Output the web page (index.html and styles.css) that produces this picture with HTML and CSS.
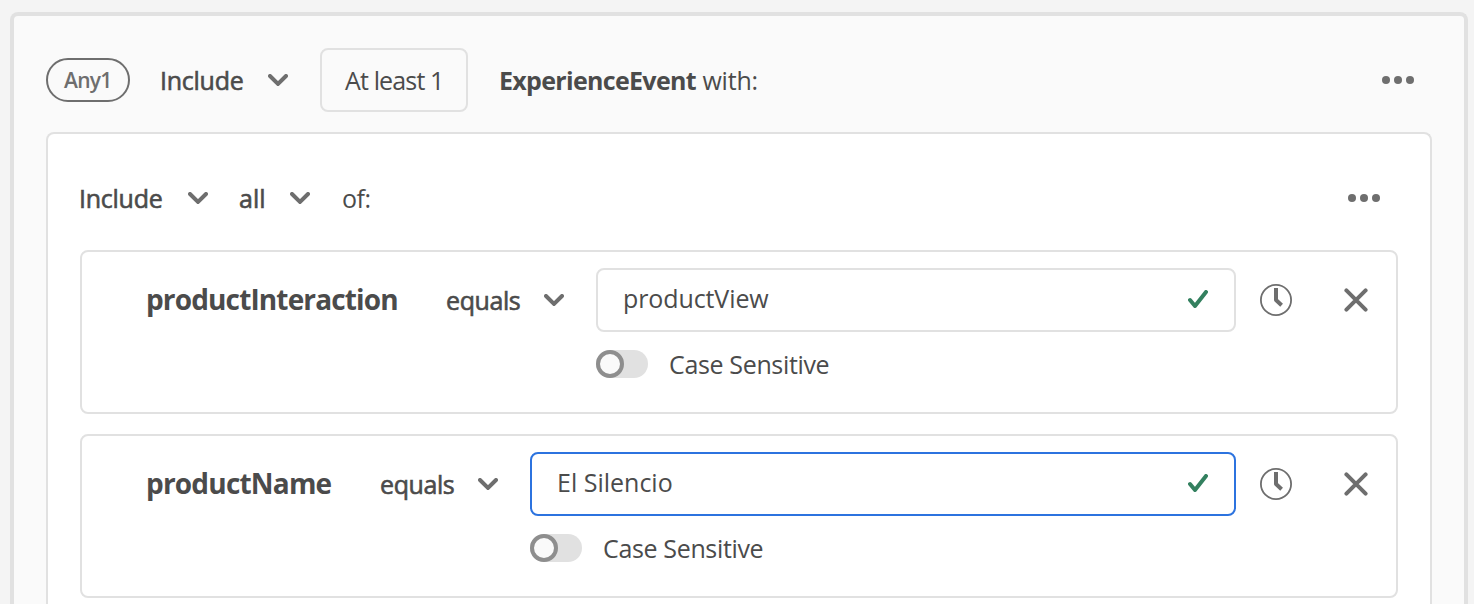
FILE: index.html
```html
<!DOCTYPE html>
<html lang="en">
<head>
<meta charset="utf-8">
<title>Segment builder</title>
<link rel="stylesheet" href="styles.css">
</head>
<body>
<svg class="defs" width="0" height="0">
  <symbol id="chevron" viewBox="0 0 20 12"><path d="M2 2 10 9.9 18 2" fill="none" stroke="currentColor" stroke-width="4" stroke-linecap="round"/></symbol>
  <symbol id="more" viewBox="0 0 32 8"><circle cx="4" cy="4" r="4"/><circle cx="16" cy="4" r="4"/><circle cx="28" cy="4" r="4"/></symbol>
  <symbol id="check" viewBox="0 0 20 18"><path d="M2 10 7 16 18 2" fill="none" stroke="currentColor" stroke-width="4" stroke-linecap="round" stroke-linejoin="round"/></symbol>
  <symbol id="clock" viewBox="0 0 32 32"><circle cx="16" cy="16" r="15.1" fill="none" stroke="currentColor" stroke-width="1.8"/><path d="M16 4V16L21.6 21.2" fill="none" stroke="currentColor" stroke-width="4" stroke-linejoin="round"/></symbol>
  <symbol id="cross" viewBox="0 0 24 24"><path d="M2.4 2.4 21.6 21.6M21.6 2.4 2.4 21.6" fill="none" stroke="currentColor" stroke-width="4" stroke-linecap="round"/></symbol>
</svg>
<main class="event">
  <header class="event-head">
    <span class="pill">Any1</span>
    <span class="picker include">Include</span>
    <svg class="chevron"><use href="#chevron"/></svg>
    <span class="count">At least 1</span>
    <span class="event-name"><b>ExperienceEvent</b> <span class="with">with:</span></span>
    <svg class="more"><use href="#more"/></svg>
  </header>
  <section class="group">
    <div class="group-head">
      <span class="picker include">Include</span>
      <svg class="chevron"><use href="#chevron"/></svg>
      <span class="picker all">all</span>
      <svg class="chevron"><use href="#chevron"/></svg>
      <span class="of">of:</span>
      <svg class="more"><use href="#more"/></svg>
    </div>
    <article class="rule">
      <b class="attr interaction">productInteraction</b>
      <span class="picker equals">equals</span>
      <svg class="chevron"><use href="#chevron"/></svg>
      <div class="value">
        <div class="field"><span class="view">productView</span><svg class="check"><use href="#check"/></svg></div>
        <div class="case"><i class="toggle"></i><span>Case Sensitive</span></div>
      </div>
      <svg class="clock"><use href="#clock"/></svg>
      <svg class="cross"><use href="#cross"/></svg>
    </article>
    <article class="rule">
      <b class="attr name">productName</b>
      <span class="picker equals">equals</span>
      <svg class="chevron"><use href="#chevron"/></svg>
      <div class="value">
        <div class="field focused"><span class="silencio">El Silencio</span><svg class="check"><use href="#check"/></svg></div>
        <div class="case"><i class="toggle"></i><span>Case Sensitive</span></div>
      </div>
      <svg class="clock"><use href="#clock"/></svg>
      <svg class="cross"><use href="#cross"/></svg>
    </article>
  </section>
</main>
</body>
</html>
```
FILE: styles.css
```css
*, *::before { box-sizing: border-box; }
html { height: 100%; overflow: hidden; }
body {
  height: 100%;
  margin: 0;
  padding: 12px 6px 0 10px;
  overflow: hidden;
  background: #f4f4f4;
  color: #4b4b4b;
  font: 25px/34px "Open Sans", "Noto Sans", sans-serif;
}
.defs { display: none; }
svg { flex: none; color: #6e6e6e; fill: #6e6e6e; }
span, b { white-space: nowrap; }

.event {
  display: flex;
  flex-direction: column;
  height: 100%;
  padding: 32px 32px 0;
  border: 4px solid #e1e1e1;
  border-bottom: 0;
  border-radius: 8px 8px 0 0;
  background: #fafafa;
}
.event-head, .group-head { display: flex; flex: none; align-items: center; }
.event-head { height: 64px; }
.pill {
  width: 84px;
  height: 44px;
  padding-left: 16px;
  border: 2px solid #6e6e6e;
  border-radius: 22px;
  color: #6e6e6e;
  font-size: 21px;
  font-weight: 600;
  line-height: 40px;
  letter-spacing: -0.7px;
}
.picker { flex: none; -webkit-text-stroke: 0.6px #4b4b4b; }
.include { width: 86px; letter-spacing: -0.25px; }
.include + .chevron { margin-left: 22px; }
.event-head .include { margin-left: 30px; }
.chevron { width: 20px; height: 12px; }
.count {
  width: 148px;
  height: 64px;
  margin-left: 32px;
  padding-left: 23px;
  border: 2px solid #e1e1e1;
  border-radius: 8px;
  line-height: 60px;
  letter-spacing: -0.85px;
}
.event-name { margin-left: 30px; padding-left: 1px; }
.event-name b { letter-spacing: -0.68px; }
.with { letter-spacing: -0.2px; }
.more { width: 32px; height: 8px; margin-left: auto; }
.event-head .more { margin-right: 18px; }

.group {
  flex: 1;
  min-height: 0;
  margin-top: 20px;
  padding: 0 32px;
  border: 2px solid #e1e1e1;
  border-bottom: 0;
  border-radius: 8px 8px 0 0;
  background: #fff;
}
.group-head { height: 116px; padding-top: 12px; }
.group-head .include { width: 87px; margin-left: -1px; }
.group-head .more { margin-right: 18px; }
.all { width: 30px; margin-left: 31px; }
.all + .chevron { margin-left: 21px; }
.of { margin-left: 32px; letter-spacing: -0.5px; }

.rule {
  display: flex;
  align-items: flex-start;
  height: 164px;
  padding: 16px 28px 0 64px;
  border: 2px solid #e1e1e1;
  border-radius: 8px;
}
.rule + .rule { margin-top: 20px; }
.attr { flex: none; padding-top: 12px; font-size: 28px; line-height: 38px; }
.interaction { width: 300px; letter-spacing: -0.86px; }
.name { width: 234px; letter-spacing: -0.8px; }
.equals { width: 76px; padding-top: 15px; letter-spacing: -0.4px; }
.rule .chevron { margin: 26px 32px 0 22px; }
.value { flex: 1; }
.field {
  display: flex;
  align-items: center;
  justify-content: space-between;
  height: 64px;
  padding: 0 26px 2px 25px;
  border: 2px solid #e1e1e1;
  border-radius: 8px;
}
.field span { margin-top: -2px; }
.focused { border-color: #2c73df; }
.view { letter-spacing: -0.1px; }
.check { width: 20px; height: 18px; color: #33805f; }
.case { display: flex; align-items: center; height: 34px; margin-top: 15px; letter-spacing: -0.35px; }
.toggle { width: 52px; height: 28px; margin-right: 21px; border-radius: 14px; background: #e1e1e1; }
.toggle::before {
  display: block;
  width: 28px;
  height: 28px;
  border: 4px solid #8e8e8e;
  border-radius: 50%;
  background: #fafafa;
  content: "";
}
.clock { width: 32px; height: 32px; margin: 16px 0 0 24px; }
.cross { width: 24px; height: 24px; margin: 20px 0 0 52px; }
```
